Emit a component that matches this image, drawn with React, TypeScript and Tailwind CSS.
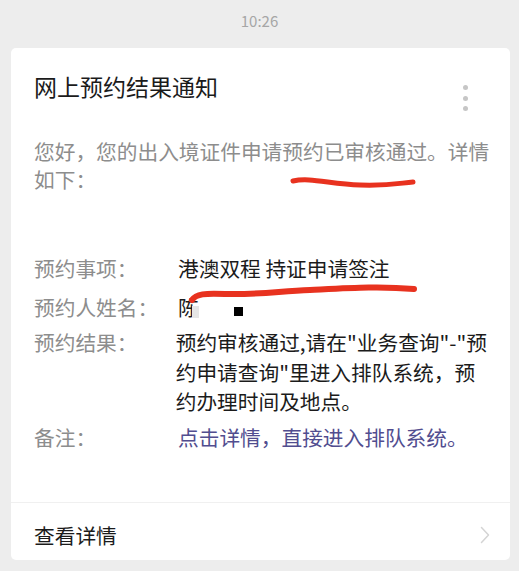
import React from "react";

const font = { fontFamily: '"Noto Sans CJK SC", "Noto Sans", sans-serif' };

export default function App() {
  return (
    <div
      className="relative w-[519px] h-[571px] bg-[#ededed] overflow-hidden"
      style={font}
    >
      <div className="h-[42px] flex items-center justify-center text-[15px] text-[#a6a6a6]">
        10:26
      </div>
      <div className="mt-[6px] ml-[11px] w-[499px] bg-white rounded-[5px] pt-[23px]">
        <div className="flex justify-between items-start h-[30px] pl-[23px] pr-[42px]">
          <div className="text-[23px] leading-[30px] text-[#1b1b1b]">网上预约结果通知</div>
          <div className="mt-[14px] flex flex-col gap-[5.5px]">
            <span className="block w-[5px] h-[5px] rounded-full bg-[#c6c6c6]" />
            <span className="block w-[5px] h-[5px] rounded-full bg-[#c6c6c6]" />
            <span className="block w-[5px] h-[5px] rounded-full bg-[#c6c6c6]" />
          </div>
        </div>
        <div className="mt-[36px] px-[23px] text-[20.7px] leading-[28px] text-[#8d8d8d] whitespace-nowrap">
          您好，您的出入境证件申请预约已审核通过。详情
          <br />
          如下：
        </div>
        <div className="mt-[61px] px-[23px] text-[20.7px] leading-[29.5px] whitespace-nowrap">
          <div className="flex">
            <div className="w-[144px] text-[#8d8d8d]">预约事项：</div>
            <div className="text-[#1b1b1b]">港澳双程 持证申请签注</div>
          </div>
          <div className="flex mt-[9px]">
            <div className="w-[144px] text-[#8d8d8d]">预约人姓名：</div>
            <div className="relative text-[#1b1b1b] flex items-center">
              <span>陈</span>
              <span className="absolute left-[14px] top-[13px] w-[7px] h-[12px] bg-[#e6e6e6]" />
              <span className="ml-[35px] mt-[9px] w-[9px] h-[9px] bg-black" />
            </div>
          </div>
          <div className="flex mt-[6px]">
            <div className="w-[144px] text-[#8d8d8d]">预约结果：</div>
            <div className="text-[#1b1b1b]">
              预约审核通过,请在"业务查询"-"预
              <br />
              约申请查询"里进入排队系统，预
              <br />
              约办理时间及地点。
            </div>
          </div>
          <div className="flex mt-[6px]">
            <div className="w-[144px] text-[#8d8d8d]">备注：</div>
            <div className="text-[#514d8f]">点击详情，直接进入排队系统。</div>
          </div>
        </div>
        <div className="mt-[50px] border-t border-[#f0f0f0] flex items-center justify-between pl-[23px] pr-[20px] pt-[17px] pb-[10px] h-[58px]">
          <div className="text-[20.7px] leading-[30px] text-[#1b1b1b]">查看详情</div>
          <svg width="10" height="18" viewBox="0 0 10 18">
            <path d="M1.5 1.5 L8.5 9 L1.5 16.5" fill="none" stroke="#d4d4d4" strokeWidth="1.5" strokeLinecap="round" strokeLinejoin="round" />
          </svg>
        </div>
      </div>
      <svg
        className="absolute left-0 top-0 pointer-events-none"
        width="519"
        height="571"
        viewBox="0 0 519 571"
      >
        <path
          d="M293 181 C 310 177, 330 184, 360 185 S 400 183, 413 182"
          fill="none"
          stroke="#e8321f"
          strokeWidth="5"
          strokeLinecap="round"
        />
        <path
          d="M192 300 C 196 294, 205 293, 225 294 C 260 295, 280 291, 310 290 C 350 288, 380 286, 414 289"
          fill="none"
          stroke="#e8321f"
          strokeWidth="6"
          strokeLinecap="round"
        />
      </svg>
    </div>
  );
}
